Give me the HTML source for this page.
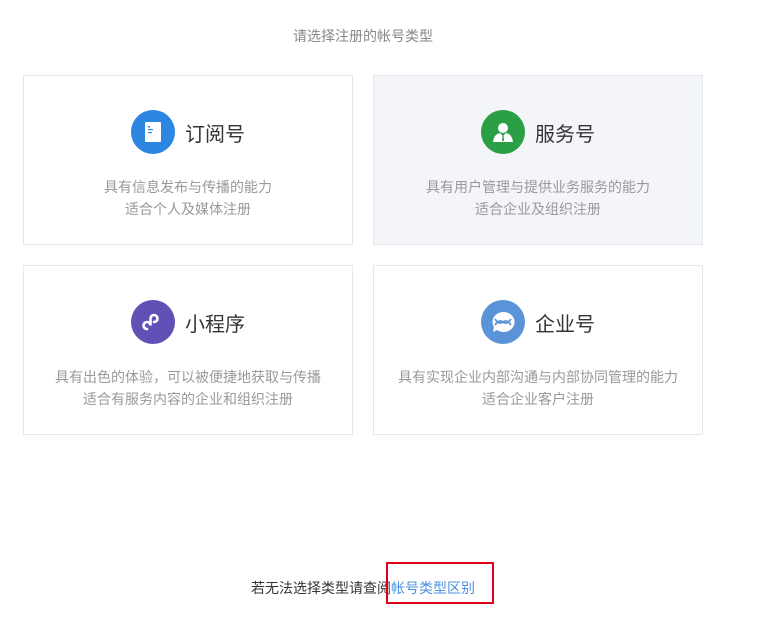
<!DOCTYPE html>
<html><head><meta charset="utf-8"><style>
*{margin:0;padding:0;box-sizing:border-box}
body{width:777px;height:622px;background:#fff;font-family:"Liberation Sans","Noto Sans CJK SC",sans-serif;position:relative;overflow:hidden}
.hd{position:absolute;top:26px;left:0;width:726px;text-align:center;font-size:14px;color:#888}
.card{position:absolute;width:330px;height:170px;border:1px solid #e4e8eb;background:#fff}
.card.g{background:#f4f5f9}
.ttl{position:absolute;top:34px;left:0;width:100%;display:flex;justify-content:center;align-items:center;font-size:20px;color:#353535}
.ic{width:44px;height:44px;border-radius:50%;margin-right:10px;display:flex;align-items:center;justify-content:center}
.ds{position:absolute;top:100px;width:100%;text-align:center;font-size:14px;line-height:22px;color:#999}
.ft{position:absolute;top:578px;left:251px;font-size:14px;color:#353535}
.ft a{color:#4a90e2;text-decoration:none}
.box{position:absolute;left:386px;top:562px;width:108px;height:42px;border:2px solid #e0001b}
</style></head><body>
<div class="hd">请选择注册的帐号类型</div>
<div class="card" style="left:23px;top:75px"><div class="ttl"><div class="ic" style="background:#2d87e0"><svg width="18" height="22"><rect x="1" y="1" width="16" height="20" fill="#fff" rx="1"/><rect x="4" y="5" width="2" height="1.5" fill="#2d87e0"/><rect x="4" y="8" width="5" height="1.2" fill="#2d87e0"/><rect x="4" y="11" width="4" height="1.2" fill="#2d87e0"/></svg></div>订阅号</div><div class="ds">具有信息发布与传播的能力<br>适合个人及媒体注册</div></div>
<div class="card g" style="left:373px;top:75px"><div class="ttl"><div class="ic" style="background:#2b9f45"><svg width="24" height="22"><circle cx="12" cy="7" r="5" fill="#fff"/><path d="M2 21 Q3 13 9 12 L12 15 L15 12 Q21 13 22 21Z" fill="#fff"/><path d="M11.5 14 L12.5 14 L13 20 L11 20Z" fill="#2b9f45"/></svg></div>服务号</div><div class="ds">具有用户管理与提供业务服务的能力<br>适合企业及组织注册</div></div>
<div class="card" style="left:23px;top:265px"><div class="ttl"><div class="ic" style="background:#6150b5"><svg width="22" height="22"><path d="M5 18 a3.5 3.5 0 1 1 3.5-3.5 L8.5 7.5 a3.5 3.5 0 1 1 3.5 3.5" stroke="#fff" stroke-width="2.6" fill="none" stroke-linecap="round"/></svg></div>小程序</div><div class="ds">具有出色的体验，可以被便捷地获取与传播<br>适合有服务内容的企业和组织注册</div></div>
<div class="card" style="left:373px;top:265px"><div class="ttl"><div class="ic" style="background:#5a93d8"><svg width="28" height="26"><path d="M14 3 a11 10 0 1 1 -6 18 L4 23 L5 18 A11 10 0 0 1 14 3Z" fill="#fff"/><path d="M6 10 Q10 16 14 13 Q18 10 22 16 M6 16 Q10 10 14 13 Q18 16 22 10" stroke="#5a93d8" stroke-width="1.8" fill="none"/></svg></div>企业号</div><div class="ds">具有实现企业内部沟通与内部协同管理的能力<br>适合企业客户注册</div></div>
<div class="ft">若无法选择类型请查阅<a>帐号类型区别</a></div>
<div class="box"></div>
</body></html>
